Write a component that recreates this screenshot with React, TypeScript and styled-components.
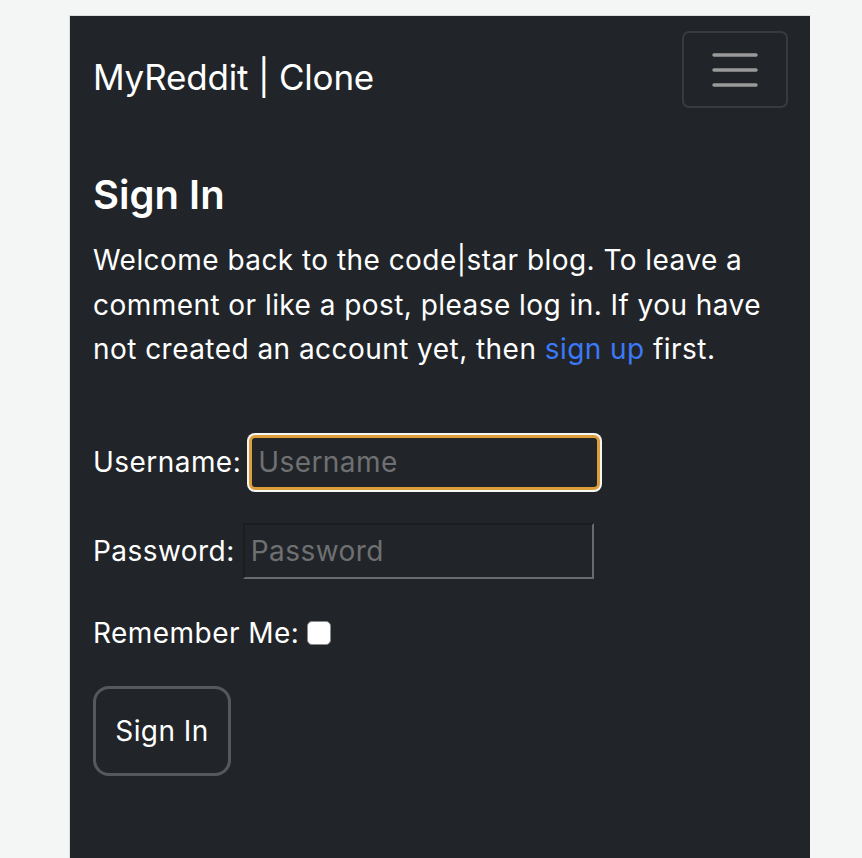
import styled, { createGlobalStyle } from 'styled-components';

const GlobalStyle = createGlobalStyle`
  * {
    box-sizing: border-box;
  }
  body {
    margin: 0;
    background: #f4f5f5;
    font-family: Inter, 'Noto Sans', 'Liberation Sans', sans-serif;
  }
`;

const App: React.FC = () => {
  return (
    <>
      <GlobalStyle />
      <Page>
        <Panel>
          <NavBar>
            <Brand>MyReddit | Clone</Brand>
            <Toggler aria-label={'menu'}>
              <svg width={46} height={34} viewBox={'0 0 46 34'}>
                <g stroke={'#9a9a9b'} strokeWidth={3.4} strokeLinecap={'round'}>
                  <line x1={2} y1={2} x2={44} y2={2} />
                  <line x1={2} y1={17} x2={44} y2={17} />
                  <line x1={2} y1={32} x2={44} y2={32} />
                </g>
              </svg>
            </Toggler>
          </NavBar>
          <Content>
            <Title>Sign In</Title>
            <Intro>
              Welcome back to the code|star blog. To leave a comment or like a post, please log
              in. If you have not created an account yet, then <a href={'#'}>sign up</a> first.
            </Intro>
            <Form>
              <Field>
                <label>Username:</label>
                <TextInput $focused type={'text'} placeholder={'Username'} />
              </Field>
              <Field>
                <label>Password:</label>
                <TextInput type={'password'} placeholder={'Password'} />
              </Field>
              <Field>
                <label>Remember Me:</label>
                <Check />
              </Field>
              <SubmitButton type={'button'}>Sign In</SubmitButton>
            </Form>
          </Content>
        </Panel>
      </Page>
    </>
  );
};

const Page = styled.div`
  display: flex;
  padding: 15px 0 0 69px;
  min-height: 858px;
`;

const Panel = styled.div`
  width: 742px;
  min-height: 843px;
  background: #212529;
  border: 1px solid #dcdddd;
  border-bottom: none;
  border-right-color: #f8f8f8;
  color: #fff;
`;

const NavBar = styled.div`
  display: flex;
  justify-content: space-between;
  align-items: flex-start;
  padding: 15px 22px 0 23px;
`;

const Brand = styled.div`
  margin-top: 29px;
  font-size: 35px;
  line-height: 1;
  letter-spacing: -0.2px;
`;

const Toggler = styled.button`
  display: flex;
  justify-content: center;
  align-items: center;
  width: 106px;
  height: 77px;
  background: transparent;
  border: 2px solid rgba(255, 255, 255, 0.1);
  border-radius: 7px;
  padding: 0;
`;

const Content = styled.div`
  display: flex;
  flex-direction: column;
  padding: 0 23px;
`;

const Title = styled.h3`
  margin: 63px 0 0;
  font-size: 40px;
  font-weight: 600;
  line-height: 1.2;
`;

const Intro = styled.p`
  margin: 19px 0 0;
  font-size: 28px;
  line-height: 44.5px;
  letter-spacing: 0.45px;
  & a {
    color: #3b79f6;
    text-decoration: none;
  }
`;

const Form = styled.div`
  display: flex;
  flex-direction: column;
  align-items: flex-start;
  margin-top: 63px;
  font-size: 28px;
  letter-spacing: 0.45px;
  line-height: 42px;
`;

const Field = styled.div`
  display: flex;
  align-items: center;
  gap: 8px;
  margin-bottom: 33px;
`;

const TextInput = styled.input<{ $focused?: boolean }>`
  width: 351px;
  height: ${(p) => (p.$focused ? '55px' : '56px')};
  padding: 0 6px;
  font-family: inherit;
  font-size: 28px;
  letter-spacing: 0.45px;
  color: #fff;
  background: #212529;
  outline: none;
  ${(p) =>
    p.$focused
      ? `
    border: 3px solid #dd9f3a;
    border-radius: 6px;
    box-shadow: 0 0 0 2px #f6f6f6;
  `
      : `
    border: 2px solid;
    border-color: #1b1d1f #6a6b6c #6a6b6c #1b1d1f;
    border-radius: 0;
  `}
  &::placeholder {
    color: #6f7072;
  }
`;

const Check = styled.span`
  display: inline-block;
  width: 24px;
  height: 24px;
  background: #fff;
  border: 1.5px solid #8b8b8b;
  border-radius: 5px;
`;

const SubmitButton = styled.button`
  width: 138px;
  height: 90px;
  margin-top: -1px;
  background: transparent;
  border: 3px solid #56595c;
  border-radius: 16px;
  color: #fff;
  font-family: inherit;
  font-size: 28px;
  letter-spacing: 0.45px;
`;

export default App;
